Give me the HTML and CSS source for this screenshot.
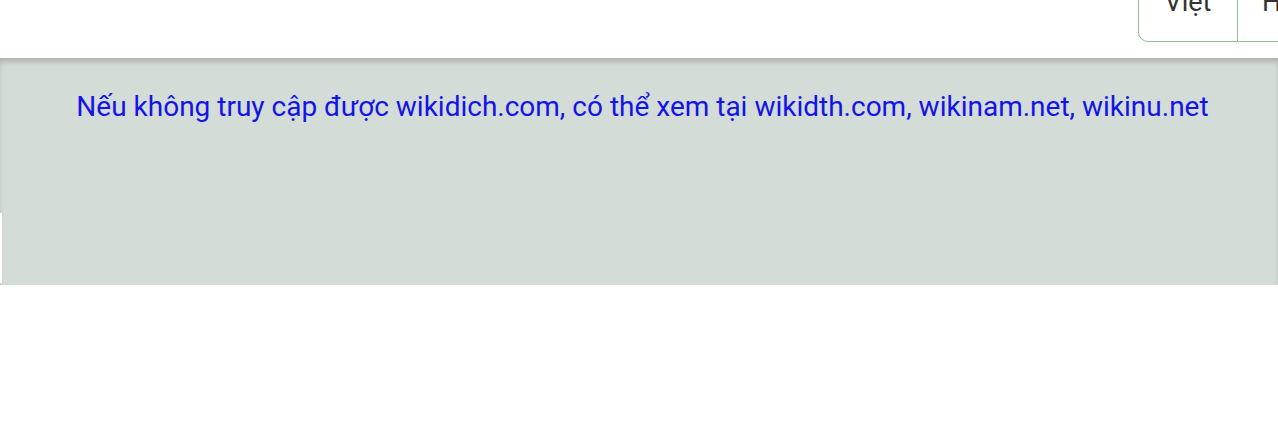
FILE: index.html
```html
<!DOCTYPE html>
<html lang="vi">
<head>
    <meta charset="UTF-8">
    <meta name="viewport" content="width=device-width, initial-scale=1.0">
    <title>Wikidich</title>
    <link rel="stylesheet" href="styles.css">
</head>
<body>

    <div class="header">
        <div class="lang-group">
            <button class="lang-btn lang-first">Việt</button>
            <button class="lang-btn lang-second">Hán</button>
        </div>
    </div>

    <div class="notice">
        <p class="notice-text">Nếu không truy cập được wikidich.com, có thể xem tại wikidth.com, wikinam.net, wikinu.net</p>
        <div class="notice-edge"></div>
    </div>

</body>
</html>
```

FILE: styles.css
```css
body {
    font-family: Roboto, "Noto Sans", Arial, sans-serif;
    margin: 0;
    background-color: #fff;
    overflow: hidden;
}
.header {
    height: 58px;
    display: flex;
    justify-content: flex-end;
    overflow: hidden;
}
.lang-group {
    display: flex;
    margin-top: -38px;
    height: 80px;
    margin-right: -60px;
}
.lang-btn {
    font-family: Roboto, "Noto Sans", Arial, sans-serif;
    font-size: 27px;
    color: #333;
    background-color: #fff;
    border: 1px solid #8fbf8f;
    padding: 0 26px;
    display: flex;
    align-items: center;
    box-sizing: border-box;
}
.lang-first {
    width: 100px;
    justify-content: center;
    border-radius: 0 0 0 10px;
    border-right: 1px solid #8fbf8f;
}
.lang-second {
    width: 100px;
    border-left: none;
    padding-left: 24px;
}
.notice {
    background-color: #d3dcd6;
    box-shadow: inset 0 5px 6px -2px rgba(0, 0, 0, 0.22);
    padding: 31px 0 2px 7px;
}
.notice-text {
    margin: 0;
    text-align: center;
    font-size: 28px;
    line-height: 36px;
    color: #1414e8;
}
.notice-edge {
    margin-top: 88px;
    margin-left: -7px;
    height: 70px;
    border-left: 2px solid #fff;
}
```
